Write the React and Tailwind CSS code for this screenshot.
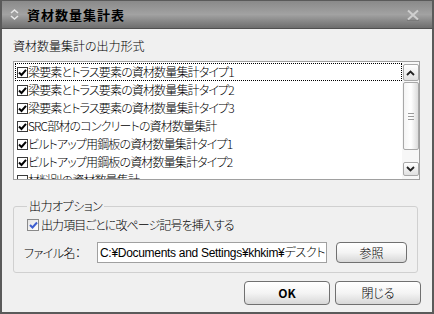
import React from 'react';

const JP = "font-['MS_UI_Gothic','Noto_Sans_CJK_JP',sans-serif] [font-feature-settings:'palt']";
const MIX = "font-['Liberation_Sans','Noto_Sans_CJK_JP',sans-serif]";

const ITEMS = [
  '梁要素とトラス要素の資材数量集計タイプ1',
  '梁要素とトラス要素の資材数量集計タイプ2',
  '梁要素とトラス要素の資材数量集計タイプ3',
  'SRC部材のコンクリートの資材数量集計',
  'ビルトアップ用鋼板の資材数量集計タイプ1',
  'ビルトアップ用鋼板の資材数量集計タイプ2',
  '材料別の資材数量集計',
];

function ClassicCheck({ checked }) {
  return (
    <span className="w-[11px] h-[11px] border border-[#3a3a3a] bg-white flex items-center justify-center shrink-0">
      {checked && (
        <svg width="9" height="9" viewBox="0 0 9 9">
          <path d="M1 4.5 L3.5 7 L8 1.8" fill="none" stroke="#000" strokeWidth="2" />
        </svg>
      )}
    </span>
  );
}

function Chevron({ up }) {
  return (
    <svg width="9" height="6" viewBox="0 0 9 6">
      <path d={up ? 'M1 5 L4.5 1.5 L8 5' : 'M1 1 L4.5 4.5 L8 1'} fill="none" stroke="#222" strokeWidth="1.8" />
    </svg>
  );
}

function Button({ children, className = '', bold }) {
  return (
    <button className={`flex items-center justify-center rounded-[4px] border border-[#707070] bg-gradient-to-b from-[#ffffff] via-[#f4f4f4] to-[#d8d8d8] text-[12px] text-black ${bold ? 'font-bold' : 'font-light'} ${className}`}>
      {children}
    </button>
  );
}

export default function App() {
  return (
    <div className={`w-[434px] h-[314px] flex flex-col ${JP}`}>
      <div className="h-[29px] flex items-center px-[7px] border-t border-x-2 border-[#5a5a5a] bg-gradient-to-b from-[#8a8a8a] via-[#a2a2a2] to-[#6e6e6e] border-b border-b-[#505050]">
        <svg width="11" height="13" viewBox="0 0 11 13" className="mr-[7px]">
          <path d="M2 5 L5.5 2 L9 5" fill="none" stroke="#e8e8e8" strokeWidth="1.6" />
          <path d="M2 8 L5.5 11 L9 8" fill="none" stroke="#e8e8e8" strokeWidth="1.6" />
        </svg>
        <span className="text-[13px] font-bold text-black tracking-[1px]">資材数量集計表</span>
        <svg width="14" height="12" viewBox="0 0 14 12" className="ml-auto mr-[5px]">
          <path d="M2 1.5 L12 10.5 M12 1.5 L2 10.5" stroke="#cfcfcf" strokeWidth="2" />
          <path d="M1 11.5 L13 11.5" stroke="#7a7a7a" strokeWidth="1" />
        </svg>
      </div>

      <div className="flex-1 flex flex-col bg-[#f0f0f0] border-x-2 border-b-2 border-[#5a5a5a] pl-[11px] pt-[9px] font-light">
        <div className="text-[12px] leading-[16px] text-black">資材数量集計の出力形式</div>

        <div className="mt-[7px] w-[407px] h-[119px] border border-[#a0a0a0] bg-white flex">
          <div className="flex-1 overflow-hidden pl-[1px] pt-[1px]">
            {ITEMS.map((t, i) => (
              <div
                key={i}
                className={`h-[18px] flex items-center pl-[1px] ${i === 0 ? 'border border-dotted border-black' : 'border border-transparent'}`}
              >
                <ClassicCheck checked={i < 6} />
                <span className="text-[12px] leading-[16px] text-black whitespace-nowrap tracking-[-0.85px]">{t}</span>
              </div>
            ))}
          </div>
          <div className="w-[17px] flex flex-col items-center pt-[2px] pb-[3px] bg-[#f7f7f7]">
            <div className="w-[16px] h-[17px] rounded-[2px] border border-[#a8a8a8] bg-gradient-to-b from-[#ffffff] to-[#e0e0e0] flex items-center justify-center">
              <Chevron up />
            </div>
            <div className="w-[16px] h-[68px] mt-[1px] rounded-[2px] border border-[#a8a8a8] bg-gradient-to-r from-[#f4f4f4] via-[#ffffff] to-[#dcdcdc] flex flex-col items-center justify-center gap-[2px]">
              <span className="w-[6px] h-px bg-[#9a9a9a]" />
              <span className="w-[6px] h-px bg-[#9a9a9a]" />
              <span className="w-[6px] h-px bg-[#9a9a9a]" />
            </div>
            <div className="flex-1" />
            <div className="w-[16px] h-[14px] rounded-[2px] border border-[#a8a8a8] bg-gradient-to-b from-[#ffffff] to-[#e0e0e0] flex items-center justify-center">
              <Chevron />
            </div>
          </div>
        </div>

        <fieldset className="mt-[18px] w-[400px] h-[75px] border border-[#d0d0d0] rounded-[3px] px-[10px]">
          <legend className="text-[12px] leading-[16px] text-black ml-[3px] px-[2px] tracking-[-0.5px]">出力オプション</legend>
          <div className="flex items-center h-[16px] mt-[3px] pl-[3px]">
            <span className="w-[12px] h-[12px] border border-[#8a8a8a] bg-gradient-to-br from-[#e4e4e4] to-[#ffffff] flex items-center justify-center mr-[2px]">
              <svg width="9" height="8" viewBox="0 0 9 8">
                <path d="M1 4 L3.5 6.5 L8 1.5" fill="none" stroke="#3d5ed0" strokeWidth="2" />
              </svg>
            </span>
            <span className="text-[12px] text-black whitespace-nowrap tracking-[-0.9px]">出力項目ごとに改ページ記号を挿入する</span>
          </div>
          <div className="flex items-center mt-[9px]">
            <span className="w-[73px] text-[12px] text-black tracking-[-0.5px]">ファイル名：</span>
            <div className="w-[230px] h-[21px] border border-[#a0a0a0] bg-white overflow-hidden flex items-center pl-[2px]">
              <span className={`text-[12px] text-black whitespace-nowrap tracking-[-0.3px] ${MIX}`}>C:¥Documents and Settings¥khkim¥デスクトッ</span>
            </div>
            <Button className="ml-[9px] w-[71px] h-[21px]">参照</Button>
          </div>
        </fieldset>

        <div className="flex justify-end gap-[5px] mt-[8px] pr-[11px]">
          <Button bold className="w-[86px] h-[24px]">OK</Button>
          <Button className="w-[86px] h-[24px]">閉じる</Button>
        </div>
      </div>
    </div>
  );
}
